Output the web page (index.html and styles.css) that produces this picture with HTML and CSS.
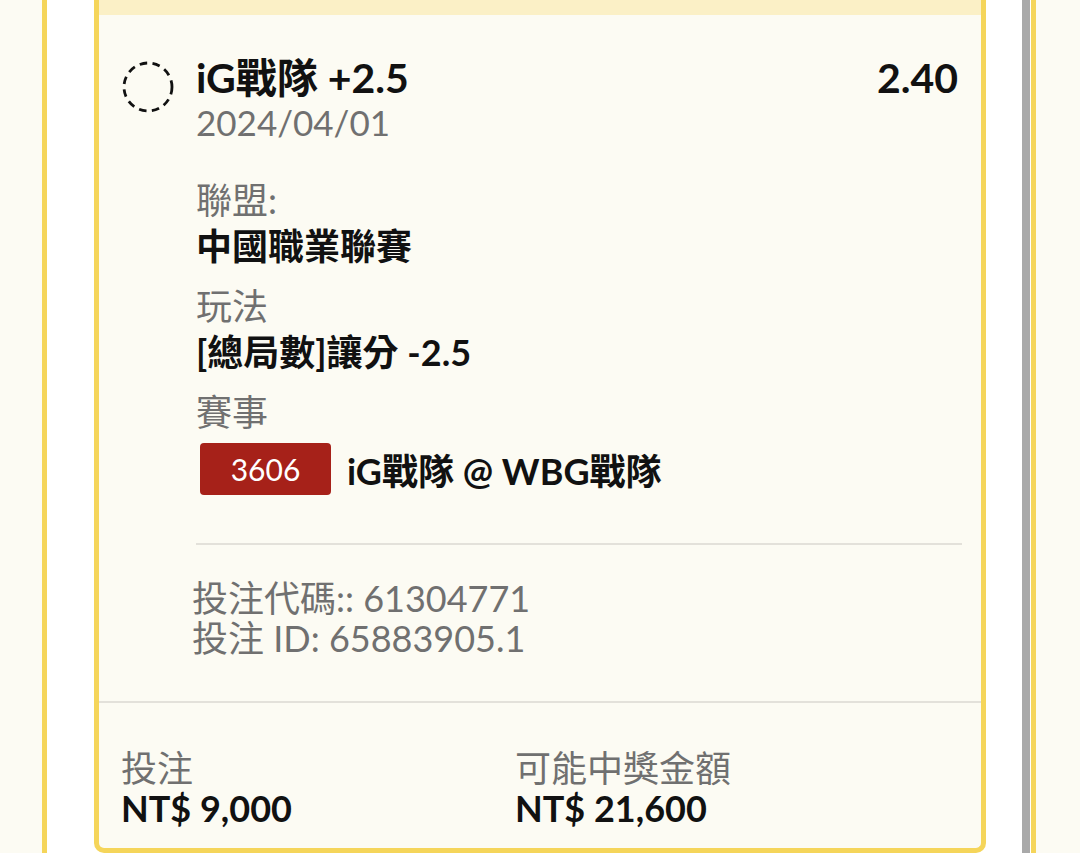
FILE: index.html
```html
<!DOCTYPE html>
<html>
<head>
  <title>投注單</title>
  <link rel="stylesheet" href="styles.css">
</head>
<body>

<div class="slider">
  <div class="slip slip-side slip-prev"></div>

  <div class="slip slip-current">
    <div class="slip-band"></div>

    <div class="bet">
      <div class="bet-check">
        <svg width="52" height="52" viewBox="0 0 52 52">
          <circle cx="26" cy="26" r="24" fill="none" stroke="#111" stroke-width="2.8" stroke-dasharray="7.5 5.5"/>
        </svg>
      </div>

      <div class="bet-main">
        <div class="bet-head">
          <div class="bet-pick">iG戰隊 +2.5</div>
          <div class="bet-odds">2.40</div>
        </div>
        <div class="bet-date">2024/04/01</div>

        <div class="bet-details">
          <div class="detail">
            <div class="detail-label">聯盟:</div>
            <div class="detail-value">中國職業聯賽</div>
          </div>
          <div class="detail">
            <div class="detail-label">玩法</div>
            <div class="detail-value">[總局數]讓分 -2.5</div>
          </div>
          <div class="detail">
            <div class="detail-label">賽事</div>
          </div>
        </div>

        <div class="bet-event">
          <span class="event-no">3606</span>
          <span class="event-name">iG戰隊 @ WBG戰隊</span>
        </div>

        <div class="bet-rule"></div>

        <div class="bet-codes">
          <div>投注代碼:: 61304771</div>
          <div>投注 ID: 65883905.1</div>
        </div>
      </div>
    </div>

    <div class="totals">
      <div class="total">
        <div class="total-label">投注</div>
        <div class="total-value">NT$ 9,000</div>
      </div>
      <div class="total">
        <div class="total-label">可能中獎金額</div>
        <div class="total-value">NT$ 21,600</div>
      </div>
    </div>
  </div>

  <div class="scrollbar"></div>
  <div class="slip slip-side slip-next"></div>
</div>

</body>
</html>
```

FILE: styles.css
```css
body {
  margin: 0;
  font-family: Lato, "Noto Sans CJK TC", sans-serif;
  background: #fff;
  color: #111;
}

.slider {
  display: flex;
  align-items: flex-start;
  height: 100vh;
  overflow: hidden;
  background: #fff;
}

.slip {
  background: #fcfbf3;
  box-sizing: border-box;
}

.slip-side {
  height: 100%;
}

.slip-prev {
  width: 47px;
  border-right: 5px solid #f5d55a;
  margin-right: 47px;
}

.slip-next {
  flex: 1;
  border-left: 5px solid #f5d55a;
}

.slip-current {
  width: 892px;
  flex-shrink: 0;
  border: 5px solid #f5d55a;
  border-top: none;
  border-radius: 0 0 10px 10px;
}

.scrollbar {
  width: 8px;
  height: 100%;
  background: #a9a9a9;
  margin-left: 36px;
  margin-right: 1px;
}

.slip-band {
  height: 15px;
  background: #fbf0c6;
}

.bet {
  display: flex;
  gap: 22px;
  padding: 39px 19px 43px 23px;
  border-bottom: 2px solid #e3e1da;
}

.bet-check {
  flex-shrink: 0;
  width: 52px;
  height: 52px;
  margin-top: 7px;
}

.bet-check svg {
  display: block;
}

.bet-main {
  flex: 1;
}

.bet-head {
  display: flex;
  justify-content: space-between;
  font-size: 41px;
  font-weight: bold;
  line-height: 48px;
}

.bet-odds {
  padding-right: 4px;
}

.bet-date {
  font-size: 35px;
  line-height: 40px;
  color: #707070;
}

.bet-details {
  margin-top: 35px;
  display: flex;
  flex-direction: column;
  gap: 14px;
}

.detail {
  font-size: 36px;
  line-height: 46px;
}

.detail-label {
  color: #707070;
}

.detail-value {
  font-weight: bold;
}

.bet-event {
  display: flex;
  align-items: center;
  gap: 16px;
  margin-top: 8px;
  padding-left: 4px;
}

.event-no {
  width: 131px;
  height: 52px;
  line-height: 52px;
  text-align: center;
  background: #a62119;
  color: #fff;
  border-radius: 4px;
  font-size: 30px;
}

.event-name {
  font-size: 36px;
  font-weight: bold;
}

.bet-rule {
  height: 2px;
  background: #e3e1da;
  margin-top: 48px;
}

.bet-codes {
  margin-top: 33px;
  margin-left: -4px;
  font-size: 36px;
  line-height: 40px;
  color: #707070;
}

.totals {
  display: grid;
  grid-template-columns: 394px 1fr;
  padding: 45px 22px 20px;
}

.total {
  font-size: 36px;
  line-height: 40px;
}

.total-label {
  color: #707070;
}

.total-value {
  font-weight: bold;
}
```
